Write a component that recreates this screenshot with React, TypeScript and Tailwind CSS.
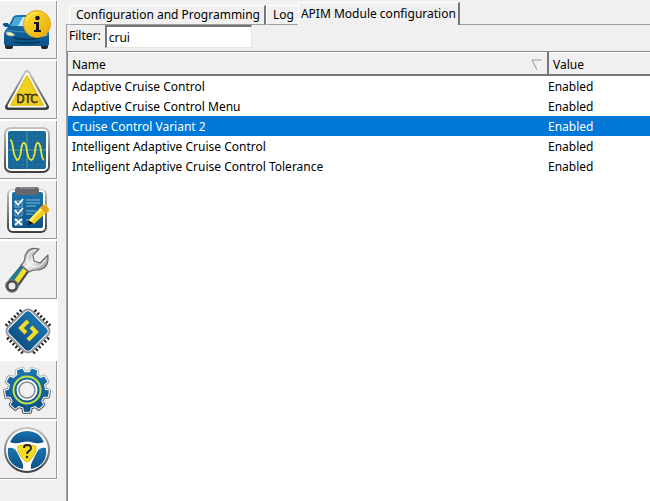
import { useState, type ReactNode } from "react";

const gearPath = Array.from({ length: 9 }, (_, i) => {
  const at = (r: number, deg: number) => {
    const a = ((i * 40 + deg + 20 - 90) * Math.PI) / 180;
    return `${(27 + r * Math.cos(a)).toFixed(1)} ${(29 + r * Math.sin(a)).toFixed(1)}`;
  };
  return `${i ? "L" : "M"}${at(18, -12)}L${at(22, -8)}L${at(22, 8)}L${at(18, 12)}`;
}).join("") + "Z";

function Defs() {
  return (
    <defs>
      <linearGradient id="metal" x1="0" y1="0" x2="0" y2="1">
        <stop offset="0" stopColor="#c4c4c8" />
        <stop offset="1" stopColor="#3c3e42" />
      </linearGradient>
      <linearGradient id="chrome" x1="0" y1="0" x2="1" y2="1">
        <stop offset="0" stopColor="#8b8d90" />
        <stop offset="0.5" stopColor="#f2f2f2" />
        <stop offset="1" stopColor="#77797c" />
      </linearGradient>
      <linearGradient id="blue" x1="0" y1="0" x2="0" y2="1">
        <stop offset="0" stopColor="#1b74ae" />
        <stop offset="1" stopColor="#0c5288" />
      </linearGradient>
      <linearGradient id="gold" x1="0" y1="0" x2="1" y2="1">
        <stop offset="0" stopColor="#ffe52e" />
        <stop offset="1" stopColor="#e6a50c" />
      </linearGradient>
    </defs>
  );
}

function CarIcon() {
  return (
    <>
      <Defs />
      <path d="M5 37h8v9q0 2-2 2H7q-2 0-2-2zM41 37h7v9q0 2-2 2h-3q-2 0-2-2z" fill="#25282b" />
      <path d="M8 26L13 16Q14 14 18 14h20q3 0 5 4l4 9q2 3 2 8v8q0 2-3 2H8q-4 0-4-3V34q0-4 4-8z" fill="url(#blue)" />
      <path d="M11 25l4-8q1-1 4-1h19l6 9z" fill="#c9e9f8" />
      <path d="M11 25l4-8q1-1 4-1h4l-5 9z" fill="#4ba8d6" />
      <path d="M3 24q-1-2 2-2h3l2 4H5z" fill="#0d588f" />
      <path d="M6 31q5-1 9 3-3 2-8 0zM47 32q-4 0-7 3 4 1 7-1z" fill="#fff5aa" stroke="#78a7bb" strokeWidth=".7" />
      <path d="M14 37q13 3 26 0M14 41q13 2 26 0" stroke="#063657" strokeWidth="1.4" fill="none" />
      <path d="M7 29q18 4 39 0" stroke="#3b92c9" fill="none" />
      <circle cx="37" cy="23" r="13.5" fill="url(#gold)" stroke="#e3a414" />
      <path d="M26 20q3-8 12-8" stroke="#fff280" fill="none" />
      <circle cx="37.5" cy="17" r="2.3" fill="#161719" />
      <path d="M34 21h5v8h2v2h-7v-2h2v-6h-2z" fill="#161719" />
    </>
  );
}

function DtcIcon() {
  return (
    <>
      <path d="M27 12L46 46H8z" fill="url(#metal)" stroke="url(#metal)" strokeWidth="6" strokeLinejoin="round" />
      <path d="M27 13L45 45H9z" fill="#fff" stroke="#fff" strokeWidth="3" strokeLinejoin="round" />
      <path d="M27 15L43 44H11z" fill="#f0d020" stroke="#e8c81c" strokeWidth="2" strokeLinejoin="round" />
      <text x="27" y="42" textAnchor="middle" className="fill-[#363521] stroke-[#363521] stroke-[0.6px] font-['DejaVu_Sans_Condensed',sans-serif] text-[12px]">DTC</text>
    </>
  );
}

function ScopeIcon() {
  return (
    <>
      <rect x="4" y="6" width="46" height="46" rx="7" fill="url(#metal)" />
      <rect x="6" y="8" width="42" height="42" rx="5" fill="#fff" />
      <rect x="8" y="10" width="38" height="38" rx="2" fill="#14689c" />
      <path d="M13 10v38M18 10v38M23 10v38M32 10v38M37 10v38M42 10v38M8 15h38M8 20h38M8 25h38M8 34h38M8 39h38M8 44h38" stroke="#43869d" strokeWidth=".7" strokeDasharray="1 2" />
      <path d="M27 10v38M8 29h38" stroke="#62997f" />
      <path d="M10 19q2 0 3 8t4 12q3 0 4-9t3-8q2 0 3 8t4 9q3 0 4-9t3-8q2 0 3 8t3 9" stroke="#e8e83c" strokeWidth="1.8" fill="none" />
    </>
  );
}

function ChecklistIcon() {
  return (
    <>
      <rect x="7" y="8" width="40" height="44" rx="6" fill="url(#metal)" />
      <rect x="9" y="9" width="36" height="41" rx="4" fill="#fff" />
      <rect x="12" y="11" width="31" height="36" rx="2" fill="url(#blue)" />
      <path d="M18 6h18q3 0 3 3v2q0 3-3 3H18q-3 0-3-3V9q0-3 3-3z" fill="#64676b" />
      <path d="M19 7h16" stroke="#a4a7a9" />
      <path d="M15 20h7v6h-7zM15 29h7v6h-7zM15 38h7v6h-7z" stroke="#b6cdd8" fill="none" strokeWidth=".7" />
      <path d="M15 20l3 4 5-6M15 29l3 4 5-6M15 38l7 6M22 38l-7 6" stroke="#fff" strokeWidth="1.7" fill="none" />
      <path d="M26 19h14M26 22h14M26 25h10M26 30h10M26 33h7M26 39h4" stroke="#80bad7" />
      <path d="M29 39l-1 5 6-2z" fill="#151719" />
      <path d="M29 39L43 24q2-2 4 0l1 2q2 2 0 4L34 43z" fill="#f4cb15" />
      <path d="M29 39L42 25l2 2-13 14z" fill="#ffec66" />
      <path d="M42 25q2-2 4 0l2 2q2 2 0 4l-2 1-6-5z" fill="#e6a021" />
    </>
  );
}

function WrenchIcon() {
  return (
    <>
      <path d="M6 42L21 24l8 7-12 17q-3 4-8 2-5-3-3-8z" fill="#494e50" />
      <path d="M9 39l12-14 3 3-12 13z" fill="#197d9b" />
      <path d="M13 41l10-14 4 3-10 14z" fill="#f0df2b" />
      <path d="M39 8Q28 5 25 15q0 6-4 9l8 7q3-2 7-2 12 0 12-12v-3l-8 8-6-2-1-6z" fill="url(#chrome)" stroke="#686b70" strokeWidth="1.2" strokeLinejoin="round" />
      <path d="M36 9q-9 1-9 11 0 5 8 6 8-1 10-7" stroke="#fff" fill="none" />
      <circle cx="12" cy="45" r="5" fill="#ececec" stroke="#45494d" strokeWidth="3" />
      <circle cx="12" cy="45" r="6.2" fill="none" stroke="#85898b" />
    </>
  );
}

function ChipIcon() {
  return (
    <>
      <g transform="rotate(45 28 30)">
        <path d="M19 9v42M23 9v42M27 9v42M31 9v42M35 9v42M7 21h42M7 25h42M7 29h42M7 33h42M7 37h42M39 9v42M7 41h42" stroke="#202225" strokeWidth="1.9" />
        <rect x="11" y="13" width="34" height="34" rx="6" fill="#fff" stroke="#96999d" strokeWidth="2" />
        <rect x="13" y="15" width="30" height="30" rx="4" fill="url(#blue)" />
      </g>
      <path d="M28 20L21 27L26 32M31 26L36 31L28 39" stroke="#f0dc2c" strokeWidth="4" fill="none" />
    </>
  );
}

function GearIcon() {
  return (
    <>
      <path d={gearPath} fill="url(#metal)" stroke="url(#metal)" strokeWidth="4" strokeLinejoin="round" />
      <path d={gearPath} fill="#fff" stroke="#fff" strokeWidth="2" strokeLinejoin="round" />
      <path d={gearPath} fill="url(#blue)" />
      <circle cx="27" cy="29" r="13.5" fill="none" stroke="#c2df45" strokeWidth="2" />
      <circle cx="27" cy="29" r="9.5" fill="#f0f0f0" stroke="#fff" strokeWidth="2" />
      <circle cx="27" cy="29" r="8" fill="none" stroke="#85888c" strokeWidth="1.5" />
    </>
  );
}

function SteeringIcon() {
  return (
    <>
      <circle cx="27" cy="29" r="22" fill="#fff" stroke="url(#metal)" strokeWidth="2" />
      <path d="M10 21q5-11 17-11t17 11q-5 2-9 1-8-3-16 0-5 1-9-1z" fill="url(#blue)" />
      <path d="M8 27q6-1 9 4l5 10q2 3 1 7-10-2-14-10-2-5-1-11zM46 27q-6-1-9 4l-5 10q-2 3-1 7 10-2 14-10 2-5 1-11z" fill="url(#blue)" />
      <path d="M18 25q9-3 18 0 1 8-7 15-2 2-4 0-8-7-7-15z" fill="#f7dc24" stroke="#e6b91a" />
      <path d="M24 27q0-3 3-3 4 0 4 3 0 2-2 3t-2 3" fill="none" stroke="#242421" strokeWidth="2" />
      <circle cx="27" cy="36" r="1.2" fill="#242421" />
    </>
  );
}

const tools: { name: string; icon: ReactNode }[] = [
  { name: "Vehicle information", icon: <CarIcon /> },
  { name: "Trouble codes", icon: <DtcIcon /> },
  { name: "Oscilloscope", icon: <ScopeIcon /> },
  { name: "Tests", icon: <ChecklistIcon /> },
  { name: "Service", icon: <WrenchIcon /> },
  { name: "Module configuration", icon: <ChipIcon /> },
  { name: "Settings", icon: <GearIcon /> },
  { name: "Help", icon: <SteeringIcon /> },
];

const tabs = ["Configuration and Programming", "Log", "APIM Module configuration"];
const parameters = [
  "Adaptive Cruise Control",
  "Adaptive Cruise Control Menu",
  "Cruise Control Variant 2",
  "Intelligent Adaptive Cruise Control",
  "Intelligent Adaptive Cruise Control Tolerance",
];

export default function App() {
  const [filter, setFilter] = useState("crui");
  const [tool, setTool] = useState(5);
  const [tab, setTab] = useState(2);
  const [selected, setSelected] = useState(parameters[2]);
  const rows = parameters.filter((name) => name.toLowerCase().includes(filter.toLowerCase()));

  return (
    <div className="flex min-h-screen bg-[#f0f0f0] font-['Noto_Sans','DejaVu_Sans',sans-serif] text-[12px] leading-5 text-black">
      <nav aria-label="Tools" className="flex w-[58px] shrink-0 flex-col">
        {tools.map(({ name, icon }, i) => (
          <button
            key={name}
            aria-label={name}
            onClick={() => setTool(i)}
            className={
              i === tool
                ? "h-[60px] w-[58px] bg-white"
                : "h-[60px] w-[58px] border-r border-b border-white shadow-[inset_0_1px_#fff,inset_-1px_-1px_#999]"
            }
          >
            <svg viewBox="0 0 56 58" className="block h-[58px] w-[56px]" aria-hidden="true">{icon}</svg>
          </button>
        ))}
      </nav>

      <main className="ml-2 flex min-w-0 flex-1 flex-col">
        <div role="tablist" className="flex h-[25px] items-end">
          <div className="h-full w-[3px] border-b border-[#a0a0a0]" />
          {tabs.map((name, i) => (
            <button
              key={name}
              role="tab"
              aria-selected={i === tab}
              onClick={() => setTab(i)}
              className={
                i === tab
                  ? "h-[23px] shrink-0 border-t border-r-2 border-l border-t-white border-r-[#777] border-l-white px-0.5 leading-5"
                  : "h-5 shrink-0 border-t border-r-2 border-b border-l border-t-white border-r-[#777] border-b-[#a0a0a0] border-l-white pr-1 pl-1.5 leading-[18px] has-[+[aria-selected=true]]:border-r-0"
              }
            >
              {name}
            </button>
          ))}
          <div className="h-full flex-1 border-b border-[#a0a0a0]" />
        </div>

        <section role="tabpanel" className="flex flex-1 flex-col border-l border-[#a0a0a0]">
          <div className="flex h-[26px] items-start gap-1 pl-0.5">
            <label htmlFor="filter" className="leading-[22px]">Filter:</label>
            <input
              id="filter"
              value={filter}
              onChange={(e) => setFilter(e.target.value)}
              className="h-[23px] w-[147px] border-t-2 border-r border-b border-l-2 border-t-[#777] border-r-[#e3e3e3] border-b-[#e3e3e3] border-l-[#777] bg-white px-0.5 outline-none"
            />
          </div>
          <div className="flex-1 border-t border-l border-[#888] bg-white">
            <table className="w-full table-fixed border-collapse">
              <colgroup>
                <col className="w-[480px]" />
                <col />
              </colgroup>
              <thead>
                <tr className="h-6 bg-[#f0f0f0] text-left shadow-[inset_0_1px_#fff,inset_0_-2px_#777]">
                  <th className="border-r-2 border-[#777] p-0 pt-0.5 font-normal">
                    <button className="flex w-full items-center justify-between pr-1 pl-1">
                      Name
                      <svg viewBox="0 0 12 12" className="size-3" aria-hidden="true">
                        <path d="M11 1L6 11" stroke="#fff" fill="none" />
                        <path d="M6 11L1 1h10" stroke="#999" fill="none" />
                      </svg>
                    </button>
                  </th>
                  <th className="p-0 pt-0.5 pl-1 font-normal">Value</th>
                </tr>
              </thead>
              <tbody className="leading-[18px]">
                {rows.map((name) => (
                  <tr
                    key={name}
                    onClick={() => setSelected(name)}
                    className={name === selected ? "h-5 bg-[#0078d7] text-white" : "h-5"}
                  >
                    <td className="truncate p-0 pt-0.5 pl-1">{name}</td>
                    <td className="p-0 pt-0.5">Enabled</td>
                  </tr>
                ))}
              </tbody>
            </table>
          </div>
        </section>
      </main>
    </div>
  );
}
